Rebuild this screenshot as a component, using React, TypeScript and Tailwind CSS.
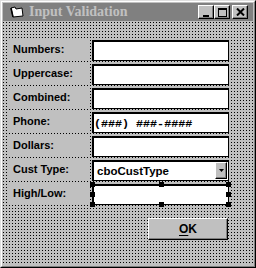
const rows = ["Numbers:", "Uppercase:", "Combined:", "Phone:", "Dollars:", "Cust Type:", "High/Low:"];

function TitleButton({ children }: { children: React.ReactNode }) {
  return (
    <div className="flex h-[14px] w-[16px] items-center justify-center border-t border-l border-t-white border-l-white border-b border-r border-b-black border-r-black bg-[#c0c0c0] shadow-[inset_-1px_-1px_0_#808080]">
      {children}
    </div>
  );
}

function TextBox({ children, className = "" }: { children?: React.ReactNode; className?: string }) {
  return (
    <div className={`relative h-[21px] w-[137px] border border-black bg-white shadow-[inset_1px_1px_0_#000] ${className}`}>
      {children}
    </div>
  );
}

function Handle({ className }: { className: string }) {
  return <div className={`absolute h-[5px] w-[5px] bg-black ${className}`} />;
}

export default function App() {
  return (
    <div className="h-[268px] w-[256px] overflow-hidden bg-[#c0c0c0] font-['Liberation_Sans',Arial,sans-serif]">
      <div className="h-full w-full border border-t-[#dfdfdf] border-l-[#dfdfdf] border-b-black border-r-black">
        <div className="h-full w-full border border-t-white border-l-white border-b-[#808080] border-r-[#808080] p-[1px]">
          {/* title bar */}
          <div className="flex h-[18px] w-[250px] items-center bg-[#808080] pl-[7px] pr-[5px]">
            <svg width="14" height="12" viewBox="0 0 14 12" className="mr-[5px]">
              <path d="M1 2 L5 1 L6 3 L12 2 L13 10 L3 11 Z" fill="#fff" stroke="#000" strokeWidth="1" />
              <path d="M1 2 L3 11" stroke="#000" strokeWidth="1.5" />
            </svg>
            <span className="font-['Liberation_Serif',serif] text-[14px] leading-[18px] font-bold text-[#c0c0c0]">Input Validation</span>
            <div className="ml-auto flex items-center">
              <TitleButton>
                <div className="mt-[7px] h-[2px] w-[6px] bg-black" />
              </TitleButton>
              <TitleButton>
                <div className="h-[9px] w-[9px] border border-t-2 border-black" />
              </TitleButton>
              <div className="w-[2px]" />
              <TitleButton>
                <svg width="9" height="8" viewBox="0 0 9 8">
                  <path d="M1 0.5 L8 7.5 M8 0.5 L1 7.5" stroke="#000" strokeWidth="2" />
                </svg>
              </TitleButton>
            </div>
          </div>
          {/* client area */}
          <div className="mt-[1px] h-[243px] w-[250px] bg-[#c0c0c0] bg-[linear-gradient(to_bottom,transparent_1px,#c0c0c0_1px),linear-gradient(to_right,#000_1px,#c0c0c0_1px)] bg-size-[3px_3px] pt-[18px] pl-[6px]">
            <div className="flex flex-col gap-[3px]">
              {rows.map((label, i) => (
                <div key={label} className="flex gap-[4px]">
                  <div className="h-[21px] w-[79px] bg-[#c0c0c0] pt-[3px] pl-[4px] text-[11px] leading-[13px] font-bold text-black">{label}</div>
                  {i === 3 ? (
                    <TextBox>
                      <span className="absolute top-[5px] left-[1px] font-['Liberation_Mono',monospace] text-[11.7px] leading-[13px] font-bold text-black">(###) ###-####</span>
                    </TextBox>
                  ) : i === 5 ? (
                    <TextBox className="flex items-center">
                      <span className="pl-[4px] pt-[1px] text-[11.5px] leading-[13px] font-bold text-black">cboCustType</span>
                      <div className="absolute top-[1px] right-[1px] flex h-[17px] w-[12px] items-center justify-center border-t border-l border-t-white border-l-white border-b border-r border-b-black border-r-black bg-[#c0c0c0] shadow-[inset_-1px_-1px_0_#808080]">
                        <svg width="5" height="3" viewBox="0 0 5 3">
                          <path d="M0 0 H5 L2.5 3 Z" fill="#000" />
                        </svg>
                      </div>
                    </TextBox>
                  ) : i === 6 ? (
                    <TextBox>
                      <Handle className="-top-[3px] -left-[3px]" />
                      <Handle className="-top-[3px] left-[66px]" />
                      <Handle className="-top-[3px] -right-[3px]" />
                      <Handle className="top-[7px] -left-[3px]" />
                      <Handle className="top-[7px] -right-[3px]" />
                      <Handle className="-bottom-[3px] -left-[3px]" />
                      <Handle className="-bottom-[3px] left-[66px]" />
                      <Handle className="-bottom-[3px] -right-[3px]" />
                    </TextBox>
                  ) : (
                    <TextBox />
                  )}
                </div>
              ))}
            </div>
            <div className="mt-[13px] ml-[139px] flex h-[22px] w-[80px] items-center justify-center border-t border-l border-t-white border-l-white border-b border-r border-b-black border-r-black bg-[#c0c0c0] shadow-[inset_-1px_-1px_0_#808080]">
              <span className="text-[12px] leading-[14px] font-bold text-black">
                <span className="underline underline-offset-2">O</span>K
              </span>
            </div>
          </div>
        </div>
      </div>
    </div>
  );
}
